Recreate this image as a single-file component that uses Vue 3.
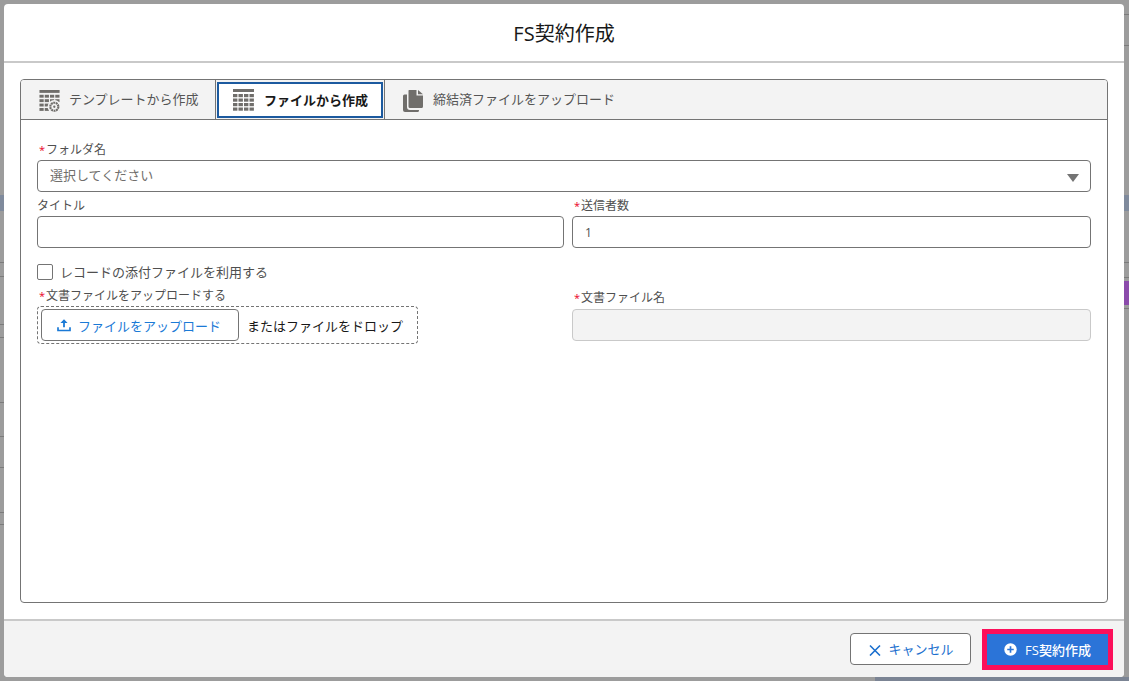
<script setup>
const tabs = [
  { label: 'テンプレートから作成', icon: 'tpl', active: false },
  { label: 'ファイルから作成', icon: 'table', active: true },
  { label: '締結済ファイルをアップロード', icon: 'docs', active: false }
]
const tableRows = [0, 1, 2, 3]
const tableCols = [0, 1, 2, 3]
const bgLines = [
  { side: 'left', top: 262 }, { side: 'left', top: 276 }, { side: 'left', top: 324 }, { side: 'left', top: 337 },
  { side: 'left', top: 402 }, { side: 'left', top: 436 }, { side: 'left', top: 467 }, { side: 'left', top: 512 }, { side: 'left', top: 524 },
  { side: 'right', top: 14 }, { side: 'right', top: 45 },
  { side: 'right', top: 262 }, { side: 'right', top: 277 }, { side: 'right', top: 308 }
]
</script>

<template>
  <div class="backdrop">
    <span class="bg-band left" />
    <span class="bg-band right" />
    <span class="bg-purple" />
    <span class="bg-bottom" />
    <span v-for="(l, i) in bgLines" :key="i" class="bg-line" :class="l.side" :style="{ top: l.top + 'px' }" />
    <section class="modal">
      <header class="head"><h1>FS契約作成</h1></header>
      <div class="content">
        <div class="tabset">
          <div class="tabbar">
            <div v-for="t in tabs" :key="t.label" class="tab" :class="[t.icon, { active: t.active }]">
              <svg v-if="t.icon === 'tpl'" class="ico" viewBox="0 0 22 24" width="22" height="23">
                <rect x="0" y="0" width="21" height="3" />
                <g v-for="r in tableRows" :key="r">
                  <rect v-for="c in tableCols" :key="c" :x="c * 5.5" :y="5 + r * 4.6" width="4.4" height="3" />
                </g>
                <circle cx="15.5" cy="17.5" r="7" fill="#f3f3f3" />
                <circle cx="15.5" cy="17.5" r="4.2" fill="none" stroke="#706e6b" stroke-width="2.2" stroke-dasharray="2 0.6" />
                <circle cx="15.5" cy="17.5" r="1.2" />
              </svg>
              <svg v-else-if="t.icon === 'table'" class="ico" viewBox="0 0 21 22" width="21" height="22">
                <rect x="0" y="0" width="21" height="3" />
                <g v-for="r in tableRows" :key="r">
                  <rect v-for="c in tableCols" :key="c" :x="c * 5.5" :y="5 + r * 4.5" width="4.4" height="3.2" />
                </g>
              </svg>
              <svg v-else class="ico" viewBox="0 0 20 22" width="20" height="22">
                <path d="M6 0h7.5v5.5H20V16.5a1.5 1.5 0 0 1-1.5 1.5H7a1.5 1.5 0 0 1-1.5-1.5V.5z" />
                <path d="M15 0l5 4.2h-5z" />
                <path d="M0 6a1.5 1.5 0 0 1 1.5-1.5H4V17a3 3 0 0 0 3 3h9v.5A1.5 1.5 0 0 1 14.500 22H2a2 2 0 0 1-2-2z" />
              </svg>
              <span class="tab-label">{{ t.label }}</span>
            </div>
          </div>
          <div class="form">
            <div class="field">
              <label><i>*</i>フォルダ名</label>
              <div class="control select">
                <span class="placeholder">選択してください</span>
                <span class="caret" />
              </div>
            </div>
            <div class="pair title-row">
              <div class="field">
                <label>タイトル</label>
                <div class="control" />
              </div>
              <div class="field">
                <label><i>*</i>送信者数</label>
                <div class="control value">1</div>
              </div>
            </div>
            <div class="check">
              <span class="box" />
              <span class="check-label">レコードの添付ファイルを利用する</span>
            </div>
            <div class="pair upload-row">
              <div class="field">
                <label><i>*</i>文書ファイルをアップロードする</label>
                <div class="drop">
                  <button class="upload" type="button">
                    <svg viewBox="0 0 14 14" width="14" height="14">
                      <path d="M7 1.200 3.400 4.900h2.700v4.300h1.800V4.900h2.700z" fill="#1b7ad6" />
                      <path d="M1 9.200v3.300h12V9.200" fill="none" stroke="#1b7ad6" stroke-width="1.700" />
                    </svg>
                    ファイルをアップロード
                  </button>
                  <span class="or">またはファイルをドロップ</span>
                </div>
              </div>
              <div class="field file-name">
                <label><i>*</i>文書ファイル名</label>
                <div class="control disabled" />
              </div>
            </div>
          </div>
        </div>
      </div>
      <footer class="foot">
        <button class="cancel" type="button">
          <svg viewBox="0 0 14 14" width="14" height="14">
            <path d="M3 3.500l10 10M13 3.500 3 13.500" stroke="#1b6fce" stroke-width="1.600" fill="none" />
          </svg>
          <span class="cancel-label">キャンセル</span>
        </button>
        <div class="highlight">
          <button class="primary" type="button">
            <svg viewBox="0 0 14 14" width="13" height="13">
              <circle cx="7" cy="7" r="6.700" fill="#fff" />
              <path d="M7 3.500v7M3.500 7h7" stroke="#2b74d8" stroke-width="1.800" />
            </svg>
            FS契約作成
          </button>
        </div>
      </footer>
    </section>
  </div>
</template>

<style scoped>
.backdrop {
  position: relative;
  box-sizing: border-box;
  width: 1129px;
  height: 681px;
  padding: 4px 5px 4px 4px;
  background: #9c9c9c;
  overflow: hidden;
  font-family: "Open Sans", "Noto Sans CJK JP", sans-serif;
  font-size: 12px;
  color: #4f4f4f;
}
.bg-band {
  position: absolute;
  top: 195px;
  height: 16px;
  width: 5px;
  background: #7f8a9c;
}
.bg-band.left { left: 0; width: 4px; }
.bg-band.right { right: 0; }
.bg-purple {
  position: absolute;
  right: 0;
  top: 281px;
  width: 5px;
  height: 24px;
  background: #8b4bab;
}
.bg-bottom {
  position: absolute;
  left: 875px;
  right: 0;
  top: 677px;
  height: 4px;
  background: #7b8494;
}
.bg-line {
  position: absolute;
  width: 5px;
  height: 1px;
  background: #7b7b7b;
}
.bg-line.left { left: 0; width: 4px; }
.bg-line.right { right: 0; }
.modal {
  position: relative;
  display: flex;
  flex-direction: column;
  height: 673px;
  background: #fff;
  border-radius: 4px;
  overflow: hidden;
}
.head {
  display: flex;
  align-items: center;
  justify-content: center;
  box-sizing: border-box;
  height: 59px;
  border-bottom: 2px solid #c9c9c9;
}
.head h1 {
  margin: 0;
  font-size: 20px;
  font-weight: 400;
  color: #181818;
}
.content {
  flex: 1;
  padding: 16px;
  min-height: 0;
  display: flex;
}
.tabset {
  flex: 1;
  display: flex;
  flex-direction: column;
  border: 1px solid #747474;
  border-radius: 4px;
  overflow: hidden;
}
.tabbar {
  display: flex;
  height: 40px;
  box-sizing: border-box;
  background: #f3f3f3;
  border-bottom: 1px solid #747474;
}
.tab {
  display: flex;
  align-items: center;
  box-sizing: border-box;
  height: 39px;
  font-size: 13px;
  color: #555;
}
.tab-label { margin-top: -2px; }
.tab.tpl {
  width: 195px;
  padding-left: 18px;
  gap: 8px;
  border-right: 1px solid #747474;
}
.tab.tpl .ico { margin-top: 4px; }
.tab.table { width: 166px; margin: 2px 1px 0 1px; padding-left: 14px; gap: 10px; }
.tab.docs { flex: 1; padding-left: 18px; gap: 10px; border-left: 1px solid #747474; }
.tab.docs .ico { margin-top: 2px; }
.tab.active {
  height: 36px;
  background: #fff;
  border: 2px solid #1c5a9f;
  font-weight: 700;
  color: #181818;
}
.ico { fill: #706e6b; flex: none; }
.form {
  flex: 1;
  padding: 20px 16px 0 16px;
}
.field { display: flex; flex-direction: column; min-width: 0; }
label {
  display: block;
  height: 20px;
  line-height: 20px;
  font-size: 12px;
  color: #4f4f4f;
}
label i {
  color: #ea001e;
  font-style: normal;
  font-size: 11px;
  margin: 0 1px 0 2px;
}
.control {
  box-sizing: border-box;
  height: 32px;
  display: flex;
  align-items: center;
  padding: 0 12px;
  background: #fff;
  border: 1px solid #747474;
  border-radius: 4px;
}
.select { justify-content: space-between; }
.placeholder { color: #706e6b; font-size: 13px; margin-top: -3px; }
.value { color: #4f4f4f; }
.caret {
  width: 0;
  height: 0;
  margin: 3px -1px 0 0;
  border-left: 6px solid transparent;
  border-right: 6px solid transparent;
  border-top: 8px solid #747474;
}
.pair {
  display: grid;
  grid-template-columns: 527px 519px;
  column-gap: 8px;
}
.title-row { margin-top: 4px; }
.check {
  display: flex;
  align-items: center;
  gap: 7px;
  height: 16px;
  margin-top: 16px;
  font-size: 13px;
}
.check-label { margin-top: -2px; }
.box {
  box-sizing: border-box;
  width: 16px;
  height: 16px;
  background: #fff;
  border: 1px solid #747474;
  border-radius: 2px;
}
.upload-row { margin-top: 6px; }
.drop {
  display: flex;
  align-items: center;
  box-sizing: border-box;
  width: 381px;
  height: 38px;
  padding-left: 3px;
  border: 1px dashed #747474;
  border-radius: 4px;
}
.upload {
  display: flex;
  align-items: center;
  justify-content: center;
  gap: 7px;
  box-sizing: border-box;
  width: 198px;
  height: 32px;
  padding: 0 2px 0 0;
  background: #fff;
  border: 1px solid #747474;
  border-radius: 4px;
  color: #1b7ad6;
  font: inherit;
  font-size: 13px;
}
.or { margin-left: 8px; color: #181818; font-size: 13px; }
.file-name { padding-top: 2px; }
.file-name .control { margin-top: 1px; }
.disabled {
  background: #f3f3f3;
  border-color: #c9c9c9;
}
.foot {
  display: flex;
  align-items: center;
  justify-content: flex-end;
  gap: 11px;
  box-sizing: border-box;
  height: 58px;
  padding: 0 11px 0 0;
  background: #f3f3f3;
  border-top: 2px solid #c9c9c9;
}
.cancel {
  display: flex;
  align-items: center;
  justify-content: center;
  gap: 7px;
  box-sizing: border-box;
  width: 121px;
  height: 32px;
  padding: 0;
  background: #fff;
  border: 1px solid #747474;
  border-radius: 4px;
  color: #1b6fce;
  font: inherit;
  font-size: 13px;
}
.cancel-label { margin-top: -2px; }
.highlight {
  box-sizing: border-box;
  width: 131px;
  height: 41px;
  border: 5px solid #fc0f5a;
}
.primary {
  display: flex;
  align-items: center;
  justify-content: center;
  gap: 8px;
  width: 100%;
  height: 100%;
  padding: 0;
  background: #2b74d8;
  border: 0;
  color: #fff;
  font: inherit;
  font-size: 13px;
  font-weight: 500;
}
</style>
